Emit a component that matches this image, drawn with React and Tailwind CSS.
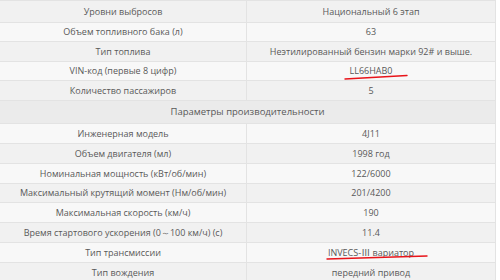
export default function App() {
  const top = [
    ["Уровни выбросов", "Национальный 6 этап", "h-[22px]", "bg-[#f1f1f1]"],
    ["Объем топливного бака (л)", "63", "h-[19px]", "bg-[#f8f8f8]"],
    ["Тип топлива", "Неэтилированный бензин марки 92# и выше.", "h-[20px]", "bg-[#f1f1f1]"],
    ["VIN-код (первые 8 цифр)", "LL66HAB0", "h-[19px]", "bg-[#f8f8f8]"],
    ["Количество пассажиров", "5", "h-[20px]", "bg-[#f1f1f1]"],
  ];
  const bottom = [
    ["Инженерная модель", "4J11", "h-[20px]", "bg-[#f8f8f8]"],
    ["Объем двигателя (мл)", "1998 год", "h-[20px]", "bg-[#f1f1f1]"],
    ["Номинальная мощность (кВт/об/мин)", "122/6000", "h-[20px]", "bg-[#f8f8f8]"],
    ["Максимальный крутящий момент (Нм/об/мин)", "201/4200", "h-[19px]", "bg-[#f1f1f1]"],
    ["Максимальная скорость (км/ч)", "190", "h-[20px]", "bg-[#f8f8f8]"],
    ["Время стартового ускорения (0～100 км/ч) (с)", "11.4", "h-[20px]", "bg-[#f1f1f1]"],
    [
      "Тип трансмиссии",
      <span>
        INVECS-
        <span style={{ fontFamily: '"Noto Sans CJK SC", sans-serif' }}>Ⅲ</span> вариатор
      </span>,
      "h-[20px]",
      "bg-[#f8f8f8]",
    ],
    ["Тип вождения", "передний привод", "h-[20px]", "bg-[#f1f1f1]"],
  ];
  const Row = ({ r }) => (
    <div className={`flex border-b border-[#e3e3e3] ${r[2]} ${r[3]}`}>
      <div className="flex w-[247px] shrink-0 items-center justify-center border-r border-[#e3e3e3]">{r[0]}</div>
      <div className="flex flex-1 items-center justify-center">{r[1]}</div>
    </div>
  );
  return (
    <div
      className="relative h-[280px] w-[500px] overflow-hidden bg-white text-[9px] text-[#595959]"
      style={{ fontFamily: '"Open Sans", "Noto Sans", sans-serif' }}
    >
      <div className="w-[496px] border-r border-t border-[#e3e3e3]">
        {top.map((r, i) => (
          <Row key={i} r={r} />
        ))}
        <div className="flex h-[23px] items-center justify-center border-b border-[#e3e3e3] bg-[#ebebeb] text-[9.5px]">
          Параметры производительности
        </div>
        {bottom.map((r, i) => (
          <Row key={i} r={r} />
        ))}
      </div>
      <svg className="pointer-events-none absolute left-0 top-0" width="500" height="280">
        <path d="M345 79 Q378 77 407 75.5" stroke="#e8141a" strokeWidth="1.4" fill="none" strokeLinecap="round" />
        <path d="M327 259 Q380 257.5 427 256" stroke="#e8141a" strokeWidth="1.4" fill="none" strokeLinecap="round" />
      </svg>
    </div>
  );
}
